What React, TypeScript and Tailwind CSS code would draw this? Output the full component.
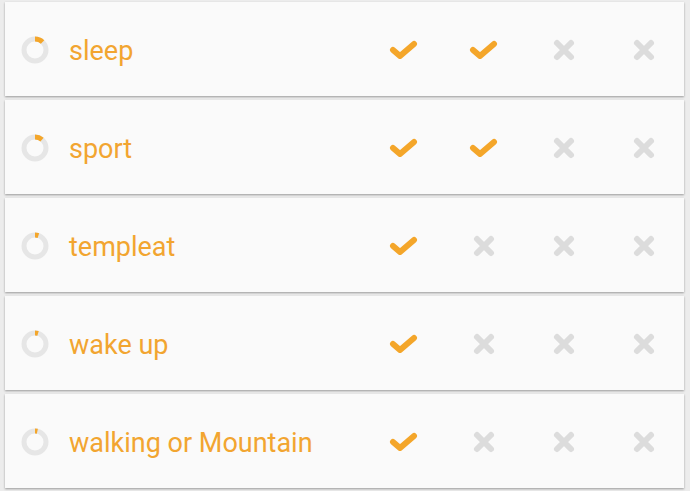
import React from "react";

type Habit = { name: string; progress: number; days: boolean[] };

const habits: Habit[] = [
  { name: "sleep", progress: 0.12, days: [true, true, false, false] },
  { name: "sport", progress: 0.11, days: [true, true, false, false] },
  { name: "templeat", progress: 0.05, days: [true, false, false, false] },
  { name: "wake up", progress: 0.045, days: [true, false, false, false] },
  { name: "walking or Mountain", progress: 0.035, days: [true, false, false, false] },
];

function Ring({ progress }: { progress: number }) {
  const r = 11;
  const c = 2 * Math.PI * r;
  return (
    <svg width="28" height="28" viewBox="0 0 28 28">
      <circle cx="14" cy="14" r={r} fill="none" stroke="#e6e6e6" strokeWidth="5" />
      <circle
        cx="14"
        cy="14"
        r={r}
        fill="none"
        stroke="#f4a62a"
        strokeWidth="5"
        strokeDasharray={`${c * progress} ${c}`}
        transform="rotate(-90 14 14)"
      />
    </svg>
  );
}

function Check() {
  return (
    <svg width="30" height="24" viewBox="0 0 30 24">
      <polyline
        points="4,12 11,18 25,6"
        fill="none"
        stroke="#f4a62a"
        strokeWidth="6"
        strokeLinecap="round"
        strokeLinejoin="round"
      />
    </svg>
  );
}

function Cross() {
  return (
    <svg width="24" height="24" viewBox="0 0 24 24">
      <path d="M5 5 L19 19 M19 5 L5 19" stroke="#dcdcdc" strokeWidth="6" strokeLinecap="round" />
    </svg>
  );
}

export default function App() {
  return (
    <main
      className="min-h-[491px] bg-[#ececec] pl-[5px] pr-[6px] pt-[2px] flex flex-col gap-[4px]"
      style={{ fontFamily: "Roboto, 'Liberation Sans', sans-serif" }}
    >
      {habits.map((h) => (
        <div
          key={h.name}
          className="h-[94px] bg-[#fafafa] flex items-center shadow-[0_1px_2px_rgba(0,0,0,0.35)]"
        >
          <div className="pl-4 pt-[2px] flex items-center">
            <Ring progress={h.progress} />
          </div>
          <span className="ml-5 mt-1 flex-1 text-[27px] text-[#f2a530]">{h.name}</span>
          <div className="flex pt-[2px]">
            {h.days.map((d, i) => (
              <div key={i} className="w-20 flex justify-center items-center">
                {d ? <Check /> : <Cross />}
              </div>
            ))}
          </div>
        </div>
      ))}
    </main>
  );
}
